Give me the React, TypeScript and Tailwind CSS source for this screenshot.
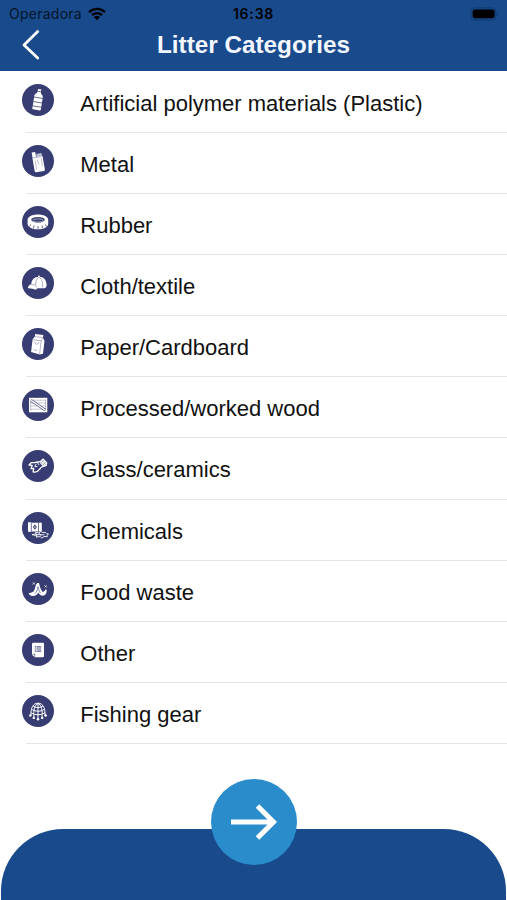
import type { ReactNode } from "react";

type Category = { label: string; icon: ReactNode };

const INK = "#373d72";

const categories: Category[] = [
  {
    label: "Artificial polymer materials (Plastic)",
    icon: (
      <g transform="rotate(9 16 16)">
        <path fill="#fff" d="M14.300 5.200h3.400v2.300l.3 1.800c1.600 1 2.300 2 2.300 3.500V25c0 .7-.4 1-1 1h-6.600c-.6 0-1-.3-1-1V12.800c0-1.500.6-2.500 2.200-3.500l.4-1.800z" />
        <path stroke={INK} strokeWidth=".7" d="M14 7.400h4M11.500 13.700h9M11.500 18.300h9M11.500 22.600h9" />
      </g>
    ),
  },
  {
    label: "Metal",
    icon: (
      <g transform="rotate(-10 16 16)">
        <path fill="#fff" d="M11 11.500h10.300v14c0 .8-.5 1.300-1.300 1.300h-7.700c-.8 0-1.300-.5-1.300-1.300z" />
        <path fill="#fff" d="M11.200 6.600h3.600v5h-3.600z" />
        <path fill="#fff" fillOpacity=".65" d="M15.300 8.800h5.500v3h-5.500z" />
        <path fill="none" stroke={INK} strokeOpacity=".6" strokeWidth=".5" d="M11.500 12.300h9.500M13.300 15v9M15.500 14.500l1 5M19.500 14v8" />
      </g>
    ),
  },
  {
    label: "Rubber",
    icon: (
      <g>
        <path fill="#fff" d="M5.600 14c0-3.300 4.500-5.500 10.300-5.500S26.200 10.700 26.200 14v3.700c0 3.300-4.500 5.600-10.300 5.600S5.600 21 5.600 17.700z" />
        <ellipse cx="16" cy="13.800" rx="6.800" ry="2.900" fill={INK} />
        <ellipse cx="16" cy="14.500" rx="5.200" ry="1.600" fill="none" stroke="#fff" strokeOpacity=".7" strokeWidth=".7" />
        <path stroke={INK} strokeWidth=".8" d="M8.500 18.500l-.8 2M12 19.500l-.5 2.800M16 20v2.800M20 19.500l.5 2.800M23.500 18.500l.8 2" />
      </g>
    ),
  },
  {
    label: "Cloth/textile",
    icon: (
      <g>
        <path fill="#fff" d="M9.300 17.300c0-4.500 3.200-7.600 7.700-7.600 4.700 0 7.600 3.400 7.600 8.200 0 1.600-.8 3-2.500 3.300l-6.500.1-1.800 1.500c-2.300-.9-4.900-1.700-8-1.500.1-1.900 1.500-3.400 3.500-4z" />
        <circle cx="17" cy="9.400" r="1" fill="#fff" />
        <path fill="none" stroke={INK} strokeOpacity=".7" strokeWidth=".6" d="M17 10c-2.600 2-3.500 4.800-3.300 8M17 10c2.700 1.600 3.900 5 3.600 10.500M9.300 17.600c2.500-.2 4.500.5 5.500 2.600" />
      </g>
    ),
  },
  {
    label: "Paper/Cardboard",
    icon: (
      <g transform="rotate(7 16 16)">
        <path fill="#fff" d="M12 6.500h8.200v2.700l1.900 3V25l-3.200 1.200-8.800-1.500V12L12 9z" />
        <path fill="none" stroke={INK} strokeOpacity=".65" strokeWidth=".55" d="M12 9h8M10.500 12.400h8.300l1.400-3.200M18.800 12.400V26M12 14.200l2.500 2.400 2.700-2.200M12.200 22l4 .6" />
      </g>
    ),
  },
  {
    label: "Processed/worked wood",
    icon: (
      <g>
        <path fill="#fff" d="M7 8.800h18.300v14.500H7z" />
        <path fill="none" stroke={INK} strokeOpacity=".5" strokeWidth=".6" d="M8.500 11.200h15.200M8.500 14h15.200M8.500 17h15.200M8.500 20.200h15.200M8.700 10.500v11.300M23.500 10.500v11.300" />
        <path stroke={INK} strokeWidth="2.600" d="M9 11.400L23.200 21" />
        <path stroke="#fff" strokeWidth="1.500" d="M9 11.400L23.200 21" />
      </g>
    ),
  },
  {
    label: "Glass/ceramics",
    icon: (
      <g fill="none" stroke="#fff" strokeWidth="1.300" strokeLinejoin="round" strokeLinecap="round">
        <path d="M19.300 11.700l-3.600.1-2.500.7-4 .2-2.200 2.300 3.200.4-1.200 3.300 2.700-.3-.6 3.500c2.800.8 5-.6 6.300-2.600 1.200-2 2.300-2.800 4.500-3.200z" />
        <path d="M14 14.200l-1.200 2.500 2.200-.2M15.500 12.200l1.300 2.500" strokeWidth=".9" />
        <path fill="#fff" d="M19.200 10.700l2-1.600 3.500 3.800-.5 2.500-2.400 1-3-3.300z" />
        <path stroke={INK} strokeOpacity=".7" strokeWidth=".5" d="M20.200 10.500l4 4.300M19.300 12.500l3 3.300M22 10.200l-2.800 2.600M23.600 12.200L21 14.700" />
      </g>
    ),
  },
  {
    label: "Chemicals",
    icon: (
      <g>
        <path fill="#fff" d="M6 10.500c1.300-.4 2.500-.3 3.500.2h8c1.500-.6 2.200-.2 2.300.5v7.600c-.3 1-1 1.100-2.300.8H9.500c-1.200.5-2.400.4-3.500 0z" />
        <path stroke={INK} strokeWidth=".7" d="M9.300 11v8.500M16.500 11v8.500" />
        <path fill={INK} d="M12.900 12.300l2 2.700-2 2.700-2-2.700z" />
        <circle cx="12.900" cy="15" r=".8" fill="#fff" />
        <path fill={INK} stroke="#fff" strokeWidth=".9" strokeLinejoin="round" d="M18.700 19.500l2.200 1 2.600-.1 1 1.200 2 .5-1.600 1.400.4 1.200-3.300-.2-2.200 1.600-1.600-1.500-4.200.4 1-1.500-5-.8 4-.7-.7-1.500 3.600.4z" />
        <path stroke="#fff" strokeWidth=".9" d="M14 22.600l8.500.2M17 21.200l2 2.500" />
      </g>
    ),
  },
  {
    label: "Food waste",
    icon: (
      <g>
        <path fill="#fff" d="M15.200 9.900l1.800.2c.6 3.400 1.900 7 3.700 8.900l1.600-.8 1.400-1.900.9.500c.3 3-.9 5.800-3.600 5.900-2.200 0-3.800-1.200-4.700-3.100-.8 1.900-2.300 3.300-4.600 3.300-1.900.1-3.700-.6-4.900-2l.3-1c2.700 0 4.200-.7 5.200-2.700 1.100-2 .9-5.200 2.900-7.300z" />
        <path fill="none" stroke={INK} strokeWidth=".6" d="M15.800 13.500c-.2 3-.9 5.400-3.100 7.300M16.400 14c.1 2.200.5 4 2 6" />
        <g fill="none" stroke="#fff" strokeWidth=".8">
          <path d="M10.800 9.500l2 2M12.800 9.500l-2 2M22.700 12.400l2 2M24.700 12.400l-2 2" />
        </g>
      </g>
    ),
  },
  {
    label: "Other",
    icon: (
      <g>
        <path fill="#fff" d="M10 10.200c0-1 .5-1.500 1.500-1.500h9.300c.8 0 1.200.4 1.200 1.200v12.200c0 .8-.4 1.200-1.200 1.200h-8L10 20.700z" />
        <path fill="none" stroke={INK} strokeWidth=".65" d="M10.500 20.300h2.300v2.500" />
        <path fill="none" stroke={INK} strokeOpacity=".85" strokeWidth="1.100" strokeDasharray="1.300 .5 5" d="M12.700 12.900h6.500M12.700 15h6.500M12.700 17.100h6.500" />
      </g>
    ),
  },
  {
    label: "Fishing gear",
    icon: (
      <g fill="none" stroke="#fff" strokeWidth="1">
        <path d="M9 21c-.5-8 2-12.800 7-12.800S23.500 13 23 21" />
        <path d="M12 22c-.8-6.500.8-12.300 4-13.600 3.200 1.300 4.800 7.100 4 13.600M16 8v17" />
        <path d="M11 11q5 3.300 10 0M9.400 14.300q6.600 4 13.200 0M9 17.800q7 4 14 0" />
        <g fill="#fff" stroke="none">
          <circle cx="8.300" cy="20.500" r="1.200" />
          <circle cx="23.700" cy="20.500" r="1.200" />
          <circle cx="11.800" cy="22.900" r="1.200" />
          <circle cx="20.200" cy="22.900" r="1.200" />
          <circle cx="16" cy="24.200" r="1.300" />
        </g>
      </g>
    ),
  },
];

function StatusBar() {
  return (
    <div className="flex h-[27px] items-center justify-between pr-[7px] pl-[9px] text-[#07152b]">
      <div className="flex w-[180px] items-center gap-[6px]">
        <span className="font-['Inter',sans-serif] text-[14px] leading-none tracking-[0.25px]">Operadora</span>
        <svg width="18" height="14" viewBox="0 0 18 14" fill="none" stroke="#000" strokeWidth="2.300">
          <path d="M1 5.100a11.500 11.500 0 0 1 16 0M4 8.200a7.200 7.200 0 0 1 10 0" />
          <path fill="#000" stroke="none" d="M9 13.300L6 10.300a4.300 4.300 0 0 1 6 0z" />
        </svg>
      </div>
      <span className="mr-[2px] font-['Inter',sans-serif] text-[14px] leading-none font-semibold tracking-[0.800px] text-black">16:38</span>
      <div className="flex w-[180px] justify-end">
        <svg width="30" height="14" viewBox="0 0 30 14">
          <rect x="1" y=".9" width="25" height="12" rx="3.600" fill="none" stroke="#123a70" />
          <rect x="2.600" y="2.500" width="22" height="8.800" rx="2.200" fill="#000" />
          <path d="M27.500 4.800c1.600.6 1.600 3.600 0 4.200z" fill="#123a70" />
        </svg>
      </div>
    </div>
  );
}

export default function App() {
  return (
    <div className="flex h-[900px] w-[507px] flex-col overflow-hidden bg-white font-['Liberation_Sans',Arial,sans-serif]">
      <header className="h-[71.400px] shrink-0 bg-[#184a8c]">
        <StatusBar />
        <div className="grid h-[36px] grid-cols-[60px_1fr_60px] items-center">
          <button aria-label="Back" className="pl-[21px]">
            <svg width="20" height="32" viewBox="0 0 20 32" fill="none" stroke="#fff" strokeWidth="2.800" strokeLinecap="round" strokeLinejoin="round">
              <path d="M16.700 2.600L3 16l13.700 13" />
            </svg>
          </button>
          <h1 className="text-center text-[24.300px] leading-none font-bold whitespace-nowrap text-[#f3f7ff]">Litter Categories</h1>
        </div>
      </header>

      <ul className="shrink-0 pt-[0.500px]">
        {categories.map(({ label, icon }) => (
          <li key={label} className="flex h-[61.100px] flex-col">
            <div className="flex flex-1 items-start pl-[21.700px]">
              <svg className="mt-[12px] shrink-0" width="32" height="32" viewBox="0 0 32 32">
                <circle cx="16" cy="16" r="16" fill={INK} />
                {icon}
              </svg>
              <span className="mt-[19px] ml-[26.600px] text-[22px] leading-[25px] whitespace-nowrap text-[#111]">{label}</span>
            </div>
            <div className="ml-[26px] h-px bg-[#e4e4e6]" />
          </li>
        ))}
      </ul>

      <footer className="relative mx-px mt-auto h-[71px] shrink-0 rounded-t-[62px] bg-[#184a8c]">
        <button aria-label="Next" className="absolute -top-[50px] left-[210px] flex size-[86px] items-center justify-center rounded-full bg-[#2b8ccb]">
          <svg width="48" height="38" viewBox="0 0 48 38" fill="none" stroke="#fff" strokeWidth="5">
            <path d="M1 19h42M27.500 3L43.500 19l-16 16" />
          </svg>
        </button>
      </footer>
    </div>
  );
}
